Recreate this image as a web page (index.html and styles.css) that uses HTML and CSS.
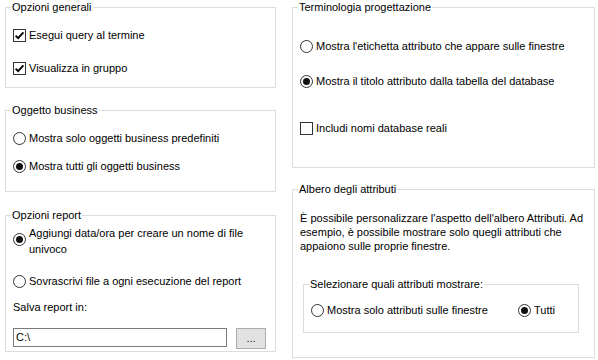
FILE: index.html
```html
<!DOCTYPE html>
<html lang="it">
<head>
<meta charset="utf-8">
<title>Opzioni</title>
<link rel="stylesheet" href="styles.css">
</head>
<body>
<div class="dialog">
  <div class="col col-left">
    <fieldset class="group g-general">
      <legend>Opzioni generali</legend>
      <div class="opt">
        <svg class="ctl" viewBox="0 0 13 13"><rect x="0.5" y="0.5" width="12" height="12" fill="#fff" stroke="#333"/><polyline points="2.6,6.6 5.1,9.1 10.4,3.4" fill="none" stroke="#000" stroke-width="1.9"/></svg>
        <span>Esegui query al termine</span>
      </div>
      <div class="opt">
        <svg class="ctl" viewBox="0 0 13 13"><rect x="0.5" y="0.5" width="12" height="12" fill="#fff" stroke="#333"/><polyline points="2.6,6.6 5.1,9.1 10.4,3.4" fill="none" stroke="#000" stroke-width="1.9"/></svg>
        <span>Visualizza in gruppo</span>
      </div>
    </fieldset>

    <fieldset class="group g-business">
      <legend>Oggetto business</legend>
      <div class="opt">
        <svg class="ctl" viewBox="0 0 13 13"><circle cx="6.5" cy="6.5" r="6" fill="#fff" stroke="#333"/></svg>
        <span>Mostra solo oggetti business predefiniti</span>
      </div>
      <div class="opt">
        <svg class="ctl" viewBox="0 0 13 13"><circle cx="6.5" cy="6.5" r="6" fill="#fff" stroke="#333"/><circle cx="6.5" cy="6.5" r="3.5" fill="#111"/></svg>
        <span>Mostra tutti gli oggetti business</span>
      </div>
    </fieldset>

    <fieldset class="group g-report">
      <legend>Opzioni report</legend>
      <div class="opt opt-multi">
        <svg class="ctl" viewBox="0 0 13 13"><circle cx="6.5" cy="6.5" r="6" fill="#fff" stroke="#333"/><circle cx="6.5" cy="6.5" r="3.5" fill="#111"/></svg>
        <span>Aggiungi data/ora per creare un nome di file<br>univoco</span>
      </div>
      <div class="opt">
        <svg class="ctl" viewBox="0 0 13 13"><circle cx="6.5" cy="6.5" r="6" fill="#fff" stroke="#333"/></svg>
        <span>Sovrascrivi file a ogni esecuzione del report</span>
      </div>
      <div class="label">Salva report in:</div>
      <div class="path-row">
        <div class="input">C:\</div>
        <div class="btn">...</div>
      </div>
    </fieldset>
  </div>

  <div class="col col-right">
    <fieldset class="group g-term">
      <legend>Terminologia progettazione</legend>
      <div class="opt">
        <svg class="ctl" viewBox="0 0 13 13"><circle cx="6.5" cy="6.5" r="6" fill="#fff" stroke="#333"/></svg>
        <span>Mostra l'etichetta attributo che appare sulle finestre</span>
      </div>
      <div class="opt">
        <svg class="ctl" viewBox="0 0 13 13"><circle cx="6.5" cy="6.5" r="6" fill="#fff" stroke="#333"/><circle cx="6.5" cy="6.5" r="3.5" fill="#111"/></svg>
        <span>Mostra il titolo attributo dalla tabella del database</span>
      </div>
      <div class="opt">
        <svg class="ctl" viewBox="0 0 13 13"><rect x="0.5" y="0.5" width="12" height="12" fill="#fff" stroke="#333"/></svg>
        <span>Includi nomi database reali</span>
      </div>
    </fieldset>

    <fieldset class="group g-tree">
      <legend>Albero degli attributi</legend>
      <p class="desc">È possibile personalizzare l'aspetto dell'albero Attributi. Ad<br>esempio, è possibile mostrare solo quegli attributi che<br>appaiono sulle proprie finestre.</p>
      <fieldset class="group g-show">
        <legend>Selezionare quali attributi mostrare:</legend>
        <div class="opt-line">
          <div class="opt opt-first">
            <svg class="ctl" viewBox="0 0 13 13"><circle cx="6.5" cy="6.5" r="6" fill="#fff" stroke="#333"/></svg>
            <span>Mostra solo attributi sulle finestre</span>
          </div>
          <div class="opt">
            <svg class="ctl" viewBox="0 0 13 13"><circle cx="6.5" cy="6.5" r="6" fill="#fff" stroke="#333"/><circle cx="6.5" cy="6.5" r="3.5" fill="#111"/></svg>
            <span>Tutti</span>
          </div>
        </div>
      </fieldset>
    </fieldset>
  </div>
</div>
</body>
</html>
```
FILE: styles.css
```css
* { box-sizing: border-box; }

html, body {
  margin: 0;
  background: #fff;
}

body {
  font-family: "Liberation Sans", Arial, sans-serif;
  font-size: 11px;
  line-height: 15px;
  color: #000;
}

.dialog {
  display: grid;
  grid-template-columns: 271px 303px;
  column-gap: 16px;
  padding-left: 5px;
}

.col {
  display: flex;
  flex-direction: column;
}

.group {
  margin: 0;
  min-width: 0;
  border: 1px solid #dcdcdc;
  padding: 0 0 0 7px;
}

.group > legend {
  padding: 0 1px;
  margin-left: -2px;
  line-height: 15px;
}

.opt {
  display: flex;
  align-items: center;
  gap: 3px;
  height: 15px;
  white-space: nowrap;
}

.ctl {
  width: 13px;
  height: 13px;
  flex: none;
}

/* Opzioni generali */
.g-general { height: 88px; }
.g-general .opt:first-of-type { margin-top: 13px; }
.g-general .opt + .opt { margin-top: 18px; }

/* Oggetto business */
.g-business { height: 89px; margin-top: 15px; }
.g-business .opt:first-of-type { margin-top: 13px; }
.g-business .opt + .opt { margin-top: 13px; }

/* Opzioni report */
.g-report { height: 144px; margin-top: 16px; }
.opt-multi {
  height: 32px;
  margin-top: 2px;
  line-height: 16px;
  white-space: normal;
}
.opt-multi .ctl { margin-top: -3px; }
.g-report .opt-multi + .opt { margin-top: 17px; }

.label {
  margin-top: 11px;
}

.path-row {
  display: flex;
  align-items: flex-start;
  margin-top: 13px;
}

.input {
  width: 214px;
  height: 19px;
  border: 1px solid #7a7a7a;
  padding: 0 2px;
  line-height: 17px;
  background: #fff;
}

.btn {
  width: 30px;
  height: 21px;
  margin-left: 9px;
  border: 1px solid #adadad;
  background: #e1e1e1;
  text-align: center;
  line-height: 19px;
  color: #222;
}

/* Terminologia progettazione */
.g-term { height: 168px; }
.g-term .opt:nth-of-type(1) { margin-top: 24px; }
.g-term .opt:nth-of-type(2) { margin-top: 20px; }
.g-term .opt:nth-of-type(3) { margin-top: 32px; }

/* Albero degli attributi */
.g-tree { height: 176px; margin-top: 14px; }

.desc {
  margin: 14px 0 0;
  line-height: 14px;
}

.g-show {
  width: 276px;
  height: 56px;
  margin: 24px 0 0 3px;
}

.opt-line {
  display: flex;
  margin-top: 11px;
}

.opt-first {
  width: 207px;
}
```
